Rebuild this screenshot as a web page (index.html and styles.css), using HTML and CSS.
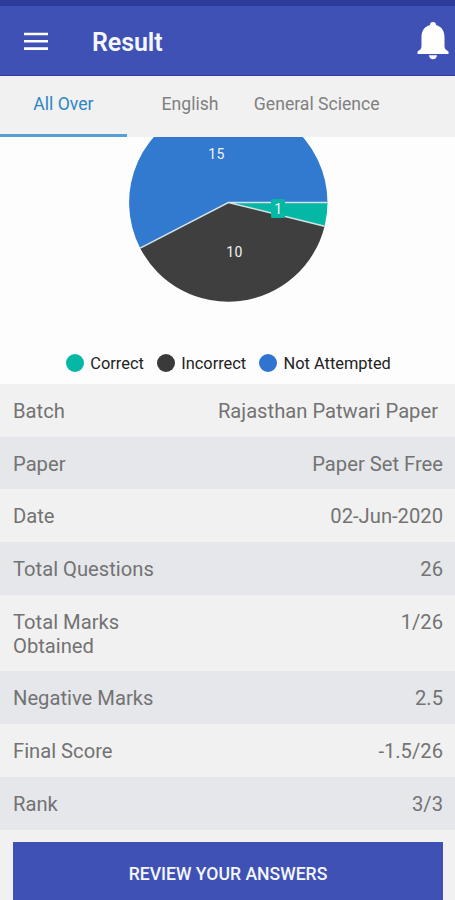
FILE: index.html
```html
<!DOCTYPE html>
<html lang="en">
<head>
    <meta charset="UTF-8">
    <meta name="viewport" content="width=device-width, initial-scale=1.0">
    <title>Result</title>
    <link rel="stylesheet" href="styles.css">
</head>
<body>
    <div class="status-bar"></div>

    <header class="app-bar">
        <svg class="menu-icon" width="24" height="18" viewBox="0 0 24 18">
            <path d="M0 2h24M0 9.3h24M0 16.6h24" stroke="#fff" stroke-width="2.6"/>
        </svg>
        <h1>Result</h1>
        <svg class="bell-icon" width="32" height="38" viewBox="0 0 32 38">
            <path fill="#fff" d="M16 0c-1.900 0-3 1.300-3 3C7.500 4.500 4.500 9 4.500 15v9c0 2.500-1.200 4-4 5.500V32h31v-2.500c-2.800-1.500-4-3-4-5.500v-9c0-6-3-10.500-8.500-12 0-1.700-1.100-3-3-3z"/>
            <path fill="#fff" d="M12 33.300h8c-.3 2.500-1.800 4-4 4s-3.700-1.500-4-4z"/>
        </svg>
    </header>

    <nav class="tabs">
        <a class="tab active">All Over</a>
        <a class="tab">English</a>
        <a class="tab">General Science</a>
    </nav>

    <section class="chart">
        <svg class="pie" width="455" height="210" viewBox="0 0 455 210">
            <g>
                <path fill="#317ad0" d="M228.300 65.500L140.200 111.200A99.200 99.200 0 1 1 327.500 65.500z"/>
                <path fill="#3f3f3f" d="M228.300 65.500L324.600 89.200A99.200 99.200 0 0 1 140.200 111.200z"/>
                <path fill="#05b8a6" d="M228.300 65.500L327.500 65.500A99.200 99.200 0 0 1 324.600 89.200z"/>
            </g>
            <path d="M140.200 111.200L228.300 65.500L324.600 89.200M228.300 65.500H327.500" fill="none" stroke="#d5e3e6" stroke-width="1.500"/>
            <rect x="271" y="62" width="14" height="19" rx="1.500" fill="#05b8a6"/>
            <g class="pie-label">
                <text x="216.500" y="21.500">15</text>
                <text x="234.500" y="120">10</text>
                <text x="278.500" y="76.500">1</text>
            </g>
        </svg>
        <div class="legend">
            <span class="legend-item correct">Correct</span>
            <span class="legend-item incorrect">Incorrect</span>
            <span class="legend-item skipped">Not Attempted</span>
        </div>
    </section>

    <dl class="details">
        <div class="row"><dt>Batch</dt><dd class="batch">Rajasthan Patwari Paper</dd></div>
        <div class="row"><dt>Paper</dt><dd>Paper Set Free</dd></div>
        <div class="row"><dt>Date</dt><dd>02-Jun-2020</dd></div>
        <div class="row"><dt>Total Questions</dt><dd>26</dd></div>
        <div class="row"><dt>Total Marks<br>Obtained</dt><dd>1/26</dd></div>
        <div class="row"><dt>Negative Marks</dt><dd>2.5</dd></div>
        <div class="row"><dt>Final Score</dt><dd>-1.5/26</dd></div>
        <div class="row"><dt>Rank</dt><dd>3/3</dd></div>
    </dl>

    <button class="review-button" type="button">REVIEW YOUR ANSWERS</button>
</body>
</html>
```
FILE: styles.css
```css
/* General styles */
* {
    box-sizing: border-box;
}

body {
    margin: 0;
    height: 900px;
    overflow: hidden;
    font-family: Roboto, sans-serif;
    background-color: #f1f1f1;
}

/* Header styles */
.status-bar {
    height: 6px;
    background-color: #2d3b9b;
}

.app-bar {
    display: flex;
    align-items: center;
    height: 70px;
    padding: 0 6px 0 24px;
    background-color: #3f51b5;
    border-bottom: 1px solid #2d3da3;
}

.app-bar h1 {
    margin: 3px 0 0 44px;
    font-size: 25px;
    font-weight: 600;
    letter-spacing: -0.1px;
    color: #f5f7ff;
}

.bell-icon {
    margin-left: auto;
}

/* Tab styles */
.tabs {
    display: flex;
    height: 61px;
}

.tab {
    width: 126.700px;
    padding-top: 18px;
    border-bottom: 3px solid transparent;
    font-size: 17.600px;
    line-height: 21px;
    text-align: center;
    white-space: nowrap;
    color: #808080;
}

.tab.active {
    color: #2c86c7;
    border-bottom-color: #559fd5;
}

/* Chart styles */
.chart {
    height: 247px;
    background-color: #fdfdfd;
}

.pie {
    display: block;
}

.pie-label {
    font-size: 14px;
    letter-spacing: 0.5px;
    text-anchor: middle;
    fill: #f2f2f2;
}

.legend {
    display: flex;
    padding: 6px 0 0 66px;
    gap: 13px;
}

.legend-item {
    display: flex;
    align-items: center;
    gap: 6.300px;
    font-size: 16.400px;
    line-height: 21px;
    color: #222;
}

.legend-item::before {
    content: "";
    width: 18px;
    height: 18px;
    margin-top: -1px;
    border-radius: 50%;
}

.correct::before {
    background-color: #05b8a6;
}

.incorrect::before {
    background-color: #3a3a3a;
}

.skipped::before {
    background-color: #2f74d0;
}

/* Details styles */
.details {
    margin: 0;
}

.row {
    display: flex;
    justify-content: space-between;
    padding: 15px 12px 13.700px 13px;
    font-size: 20.200px;
    line-height: 24px;
    color: #737373;
}

.row:nth-child(even) {
    background-color: #e5e7eb;
}

.row dd {
    margin: 0;
}

.row .batch {
    padding-right: 5px;
}

/* Button styles */
.review-button {
    display: block;
    width: 430px;
    height: 64px;
    margin: 12px 0 0 13px;
    border: none;
    font-family: inherit;
    font-size: 17.600px;
    font-weight: 500;
    color: #f5f7ff;
    background-color: #3f51b5;
}
```
